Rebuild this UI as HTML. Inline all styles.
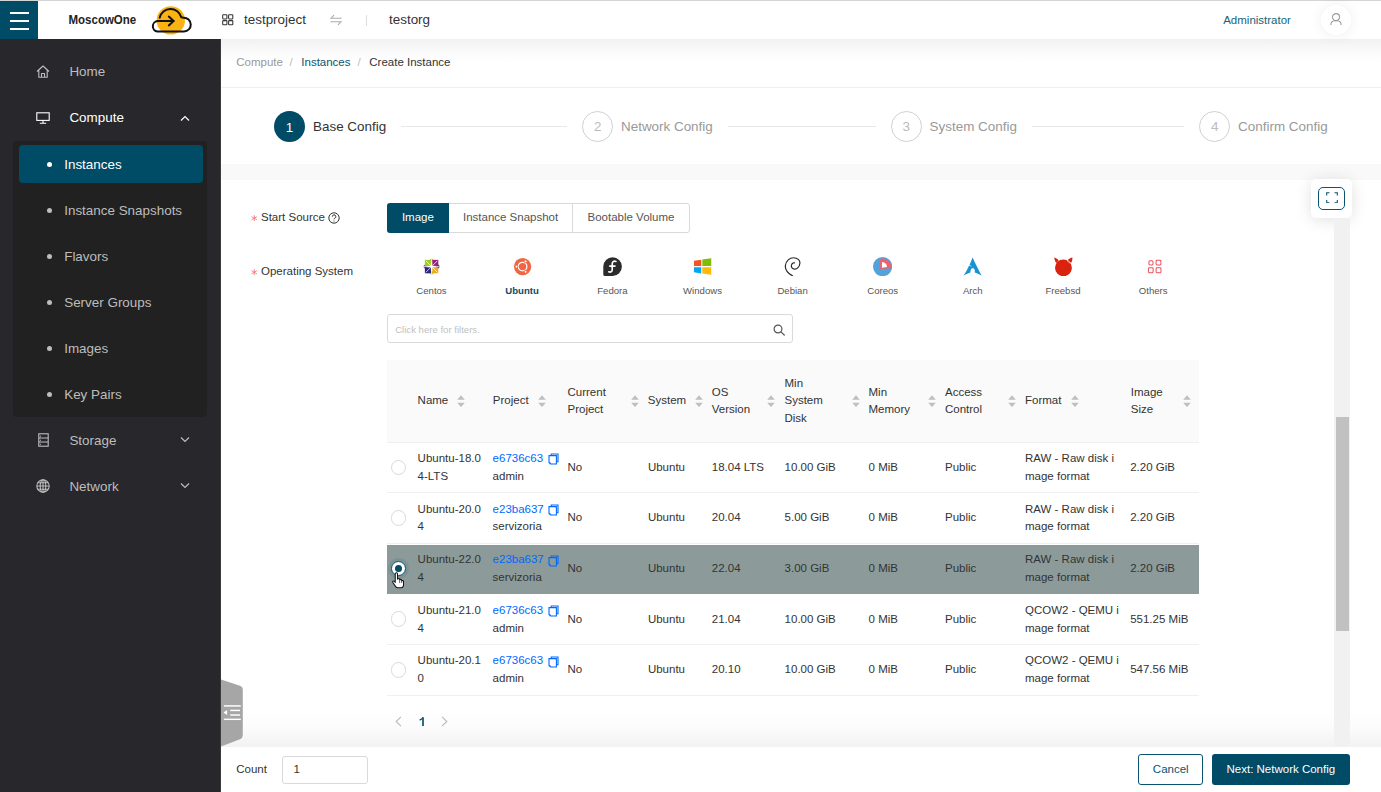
<!DOCTYPE html><html><head><meta charset="utf-8"><style>
html,body{margin:0;padding:0;width:1381px;height:792px;overflow:hidden;background:#fff;font-family:"Liberation Sans",sans-serif;}
.t{position:absolute;white-space:nowrap;}
.b{position:absolute;box-sizing:border-box;}
</style></head><body>
<div class="b" style="left:221.00px;top:39.00px;width:1160.00px;height:48.50px;background:#fff;"></div>
<div class="b" style="left:221.00px;top:87.00px;width:1160.00px;height:1.00px;background:#f0f0f0;"></div>
<div class="b" style="left:221.00px;top:88.00px;width:1160.00px;height:76.00px;background:#fff;"></div>
<div class="b" style="left:221.00px;top:164.00px;width:1160.00px;height:16.00px;background:#f9f9f9;"></div>
<div class="b" style="left:221.00px;top:39.00px;width:1160.00px;height:22.00px;background:linear-gradient(#f1f1f1 0%,#f7f7f7 35%,#fcfcfc 70%,rgba(255,255,255,0) 100%);"></div>
<div class="b" style="left:0.00px;top:0.00px;width:1381.00px;height:1.00px;background:#d4d4d4;"></div>
<div class="b" style="left:0.00px;top:1.00px;width:38.00px;height:38.00px;background:#004b66;"></div>
<div class="b" style="left:9.80px;top:12.20px;width:19.20px;height:2.20px;background:#fff;"></div>
<div class="b" style="left:9.80px;top:20.00px;width:19.20px;height:2.20px;background:#fff;"></div>
<div class="b" style="left:9.80px;top:27.60px;width:19.20px;height:2.20px;background:#fff;"></div>
<div class="t" style="left:68.50px;top:13.99px;font-size:11.51px;line-height:13.24px;color:#222;font-weight:bold;transform:scaleY(1.1);transform-origin:0 80%;">MoscowOne</div>
<svg class="b" style="left:150.00px;top:5.00px;" width="42" height="31" viewBox="0 0 42 31"><circle cx="20.8" cy="15.4" r="14.2" fill="#fbb314"/>
<path d="M9.7 12.8 A11.1 11.1 0 0 1 31.3 12.3 L33.6 12.7 A6.9 6.9 0 0 1 34 26.6 H7.4 A5.3 5.3 0 0 1 7.4 16.1 H23.6" fill="none" stroke="#111" stroke-width="2" stroke-linecap="round" stroke-linejoin="round"/>
<path d="M18.8 11.6 L23.6 16.1 L18.8 20.4" fill="none" stroke="#111" stroke-width="2" stroke-linecap="round" stroke-linejoin="round"/></svg>
<svg class="b" style="left:221.50px;top:14.00px;" width="12" height="12" viewBox="0 0 12 12"><g fill="none" stroke="#333" stroke-width="1.05"><rect x="0.7" y="0.7" width="4.2" height="4.2" rx="0.6"/><rect x="6.6" y="0.7" width="4.2" height="4.2" rx="0.6"/><rect x="0.7" y="6.6" width="4.2" height="4.2" rx="0.6"/><rect x="6.6" y="6.6" width="4.2" height="4.2" rx="0.6"/></g></svg>
<div class="t" style="left:244.00px;top:11.63px;font-size:13.43px;line-height:15.44px;color:#333;font-weight:normal;">testproject</div>
<svg class="b" style="left:329.50px;top:14.00px;" width="12" height="12" viewBox="0 0 12 12"><g fill="none" stroke="#aaa" stroke-width="1.1"><path d="M11.5 4.2 H1 L4 1.2"/><path d="M0.5 7.8 H11 L8 10.8"/></g></svg>
<div class="b" style="left:365.50px;top:15.00px;width:1.00px;height:11.00px;background:#ddd;"></div>
<div class="t" style="left:389.00px;top:11.63px;font-size:13.43px;line-height:15.44px;color:#333;font-weight:normal;">testorg</div>
<div class="t" style="left:1223.20px;top:13.59px;font-size:11.51px;line-height:13.24px;color:#17637a;font-weight:normal;">Administrator</div>
<div class="b" style="left:1321.30px;top:4.70px;width:30.00px;height:30.00px;border-radius:50%;background:#fff;box-shadow:0 0 14px rgba(0,0,0,0.07);"></div>
<svg class="b" style="left:1330.30px;top:13.20px;" width="12" height="12.5" viewBox="0 0 12 12.5"><g fill="none" stroke="#999" stroke-width="1.05"><circle cx="6" cy="4.1" r="3.5"/><path d="M0.8 12 Q0.9 7.8 6 7.6 Q11.1 7.8 11.2 12"/></g></svg>
<div class="b" style="left:0.00px;top:39.00px;width:220.60px;height:753.00px;background:#28272c;"></div>
<div class="b" style="left:220.20px;top:39.00px;width:1.00px;height:753.00px;background:#3a3a3a;"></div>
<div class="t" style="left:69.40px;top:63.63px;font-size:13.43px;line-height:15.44px;color:#bdbdbd;font-weight:normal;">Home</div>
<svg class="b" style="left:35.50px;top:64.50px;" width="14" height="13" viewBox="0 0 14 13"><g fill="none" stroke="#bdbdbd" stroke-width="1.1" stroke-linejoin="round"><path d="M1 6.5 L7 1 L13 6.5 M2.8 5 V12.3 H11.2 V5 M5.5 12.3 V8.5 H8.5 V12.3"/></g></svg>
<div class="t" style="left:69.40px;top:109.53px;font-size:13.43px;line-height:15.44px;color:#ffffff;font-weight:normal;">Compute</div>
<svg class="b" style="left:35.50px;top:112.00px;" width="14" height="12" viewBox="0 0 14 12"><g fill="none" stroke="#fff" stroke-width="1.1"><rect x="0.8" y="0.8" width="12.4" height="7.6"/><path d="M7 8.4 V11 M3.8 11.2 H10.2"/></g></svg>
<svg class="b" style="left:180.00px;top:114.70px;" width="10" height="7" viewBox="0 0 10 7"><path d="M1 5.5 L5 1.5 L9 5.5" fill="none" stroke="#fff" stroke-width="1.2"/></svg>
<div class="b" style="left:13.30px;top:140.80px;width:193.70px;height:276.00px;background:#212121;border-radius:4px;"></div>
<div class="b" style="left:18.70px;top:144.70px;width:184.30px;height:38.10px;background:#004b66;border-radius:4px;"></div>
<div class="b" style="left:47.00px;top:162.00px;width:5.00px;height:5.00px;border-radius:50%;background:#fff;"></div>
<div class="t" style="left:64.20px;top:156.63px;font-size:13.43px;line-height:15.44px;color:#fff;font-weight:normal;">Instances</div>
<div class="b" style="left:47.00px;top:208.03px;width:5.00px;height:5.00px;border-radius:50%;background:#bdbdbd;"></div>
<div class="t" style="left:64.20px;top:202.66px;font-size:13.43px;line-height:15.44px;color:#bdbdbd;font-weight:normal;">Instance Snapshots</div>
<div class="b" style="left:47.00px;top:254.06px;width:5.00px;height:5.00px;border-radius:50%;background:#bdbdbd;"></div>
<div class="t" style="left:64.20px;top:248.69px;font-size:13.43px;line-height:15.44px;color:#bdbdbd;font-weight:normal;">Flavors</div>
<div class="b" style="left:47.00px;top:300.09px;width:5.00px;height:5.00px;border-radius:50%;background:#bdbdbd;"></div>
<div class="t" style="left:64.20px;top:294.72px;font-size:13.43px;line-height:15.44px;color:#bdbdbd;font-weight:normal;">Server Groups</div>
<div class="b" style="left:47.00px;top:346.12px;width:5.00px;height:5.00px;border-radius:50%;background:#bdbdbd;"></div>
<div class="t" style="left:64.20px;top:340.75px;font-size:13.43px;line-height:15.44px;color:#bdbdbd;font-weight:normal;">Images</div>
<div class="b" style="left:47.00px;top:392.15px;width:5.00px;height:5.00px;border-radius:50%;background:#bdbdbd;"></div>
<div class="t" style="left:64.20px;top:386.78px;font-size:13.43px;line-height:15.44px;color:#bdbdbd;font-weight:normal;">Key Pairs</div>
<div class="t" style="left:69.40px;top:432.53px;font-size:13.43px;line-height:15.44px;color:#bdbdbd;font-weight:normal;">Storage</div>
<svg class="b" style="left:37.50px;top:432.50px;" width="11" height="14" viewBox="0 0 11 14"><g fill="none" stroke="#bdbdbd" stroke-width="1.1"><rect x="0.8" y="0.8" width="9.4" height="12.4"/><path d="M0.8 5 H10.2 M0.8 9 H10.2"/></g><g fill="#bdbdbd"><rect x="2" y="2.7" width="1" height="1"/><rect x="2" y="6.7" width="1" height="1"/><rect x="2" y="10.7" width="1" height="1"/></g></svg>
<svg class="b" style="left:179.80px;top:436.30px;" width="10" height="7" viewBox="0 0 10 7"><path d="M1 1.5 L5 5.5 L9 1.5" fill="none" stroke="#bdbdbd" stroke-width="1.2"/></svg>
<div class="t" style="left:69.40px;top:478.53px;font-size:13.43px;line-height:15.44px;color:#bdbdbd;font-weight:normal;">Network</div>
<svg class="b" style="left:35.80px;top:479.00px;" width="14" height="14" viewBox="0 0 14 14"><g fill="none" stroke="#bdbdbd" stroke-width="1.1"><circle cx="7" cy="7" r="6.2"/><ellipse cx="7" cy="7" rx="2.8" ry="6.2"/><path d="M0.8 7 H13.2 M1.8 3.8 H12.2 M1.8 10.2 H12.2 M7 0.8 V13.2"/></g></svg>
<svg class="b" style="left:179.80px;top:482.30px;" width="10" height="7" viewBox="0 0 10 7"><path d="M1 1.5 L5 5.5 L9 1.5" fill="none" stroke="#bdbdbd" stroke-width="1.2"/></svg>
<div class="t" style="left:236.30px;top:55.79px;font-size:11.51px;line-height:13.24px;color:#999;font-weight:normal;">Compute</div>
<div class="t" style="left:289.50px;top:55.79px;font-size:11.51px;line-height:13.24px;color:#bbb;font-weight:normal;">/</div>
<div class="t" style="left:301.30px;top:55.79px;font-size:11.51px;line-height:13.24px;color:#0b5470;font-weight:normal;">Instances</div>
<div class="t" style="left:357.50px;top:55.79px;font-size:11.51px;line-height:13.24px;color:#bbb;font-weight:normal;">/</div>
<div class="t" style="left:369.30px;top:55.79px;font-size:11.51px;line-height:13.24px;color:#333;font-weight:normal;">Create Instance</div>
<div class="b" style="left:274.10px;top:110.70px;width:30.90px;height:30.90px;border-radius:50%;background:#004b66;"></div>
<div class="t" style="left:189.60px;width:200px;text-align:center;top:119.63px;font-size:13.43px;line-height:15.44px;color:#fff;font-weight:normal;">1</div>
<div class="t" style="left:313.00px;top:118.83px;font-size:13.43px;line-height:15.44px;color:#333;font-weight:normal;">Base Config</div>
<div class="b" style="left:401.00px;top:126.00px;width:166.00px;height:1.00px;background:#e8e8e8;"></div>
<div class="b" style="left:582.20px;top:110.70px;width:30.90px;height:30.90px;border-radius:50%;border:1px solid #d0d0d0;"></div>
<div class="t" style="left:497.65px;width:200px;text-align:center;top:118.83px;font-size:13.43px;line-height:15.44px;color:#bbb;font-weight:normal;">2</div>
<div class="t" style="left:621.00px;top:118.83px;font-size:13.43px;line-height:15.44px;color:#999;font-weight:normal;">Network Config</div>
<div class="b" style="left:728.00px;top:126.00px;width:148.00px;height:1.00px;background:#e8e8e8;"></div>
<div class="b" style="left:890.80px;top:110.70px;width:30.90px;height:30.90px;border-radius:50%;border:1px solid #d0d0d0;"></div>
<div class="t" style="left:806.25px;width:200px;text-align:center;top:118.83px;font-size:13.43px;line-height:15.44px;color:#bbb;font-weight:normal;">3</div>
<div class="t" style="left:929.60px;top:118.83px;font-size:13.43px;line-height:15.44px;color:#999;font-weight:normal;">System Config</div>
<div class="b" style="left:1032.00px;top:126.00px;width:152.00px;height:1.00px;background:#e8e8e8;"></div>
<div class="b" style="left:1199.30px;top:110.70px;width:30.90px;height:30.90px;border-radius:50%;border:1px solid #d0d0d0;"></div>
<div class="t" style="left:1114.75px;width:200px;text-align:center;top:118.83px;font-size:13.43px;line-height:15.44px;color:#bbb;font-weight:normal;">4</div>
<div class="t" style="left:1238.10px;top:118.83px;font-size:13.43px;line-height:15.44px;color:#999;font-weight:normal;">Confirm Config</div>
<div class="b" style="left:1310.90px;top:178.70px;width:40.90px;height:38.90px;background:#fff;border-radius:5px;box-shadow:0 2px 16px rgba(0,0,0,0.12);"></div>
<div class="b" style="left:1318.00px;top:186.80px;width:27.00px;height:23.20px;border:1.2px solid #0b5470;border-radius:5px;"></div>
<svg class="b" style="left:1325.50px;top:191.80px;" width="12" height="11.5" viewBox="0 0 12 11.5"><g fill="none" stroke="#0b5470" stroke-width="1.1"><path d="M0.7 3.5 V0.7 H3.5 M8.5 0.7 H11.3 V3.5 M11.3 8 V10.8 H8.5 M3.5 10.8 H0.7 V8"/></g></svg>
<div class="b" style="left:1334.40px;top:217.60px;width:15.60px;height:529.00px;background:#f1f1f1;"></div>
<div class="b" style="left:1335.60px;top:417.00px;width:13.40px;height:213.50px;background:#c1c1c1;"></div>
<svg class="b" style="left:251.00px;top:214.50px;" width="6.5" height="6.5" viewBox="0 0 6.5 6.5"><path d="M3.25 0.2 V6.3 M0.6 1.7 L5.9 4.8 M0.6 4.8 L5.9 1.7" stroke="#f7707a" stroke-width="0.85"/></svg>
<div class="t" style="left:261.00px;top:210.99px;font-size:11.51px;line-height:13.24px;color:#333;font-weight:normal;">Start Source</div>
<svg class="b" style="left:327.80px;top:211.80px;" width="12" height="12" viewBox="0 0 12 12"><circle cx="6" cy="6" r="5.2" fill="none" stroke="#333" stroke-width="1"/><path d="M4.3 4.7 A1.75 1.75 0 1 1 6.6 6.3 C6.1 6.5 6 6.8 6 7.4" fill="none" stroke="#333" stroke-width="1"/><circle cx="6" cy="9" r="0.6" fill="#333"/></svg>
<div class="b" style="left:386.90px;top:203.30px;width:302.80px;height:30.00px;border:1px solid #d9d9d9;border-radius:3px;"></div>
<div class="b" style="left:572.00px;top:203.30px;width:1.00px;height:30.00px;background:#d9d9d9;"></div>
<div class="b" style="left:386.90px;top:203.30px;width:62.00px;height:30.00px;background:#004b66;border-radius:3px 0 0 3px;"></div>
<div class="t" style="left:317.90px;width:200px;text-align:center;top:211.49px;font-size:11.51px;line-height:13.24px;color:#fff;font-weight:normal;">Image</div>
<div class="t" style="left:410.60px;width:200px;text-align:center;top:211.49px;font-size:11.51px;line-height:13.24px;color:#555;font-weight:normal;">Instance Snapshot</div>
<div class="t" style="left:531.00px;width:200px;text-align:center;top:211.49px;font-size:11.51px;line-height:13.24px;color:#555;font-weight:normal;">Bootable Volume</div>
<svg class="b" style="left:251.00px;top:268.80px;" width="6.5" height="6.5" viewBox="0 0 6.5 6.5"><path d="M3.25 0.2 V6.3 M0.6 1.7 L5.9 4.8 M0.6 4.8 L5.9 1.7" stroke="#f7707a" stroke-width="0.85"/></svg>
<div class="t" style="left:261.00px;top:265.19px;font-size:11.51px;line-height:13.24px;color:#333;font-weight:normal;">Operating System</div>
<div class="t" style="left:331.50px;width:200px;text-align:center;top:284.86px;font-size:9.59px;line-height:11.03px;color:#555;font-weight:normal;">Centos</div>
<div class="t" style="left:422.10px;width:200px;text-align:center;top:284.86px;font-size:9.59px;line-height:11.03px;color:#0b4c66;font-weight:bold;">Ubuntu</div>
<div class="t" style="left:512.40px;width:200px;text-align:center;top:284.86px;font-size:9.59px;line-height:11.03px;color:#555;font-weight:normal;">Fedora</div>
<div class="t" style="left:602.50px;width:200px;text-align:center;top:284.86px;font-size:9.59px;line-height:11.03px;color:#555;font-weight:normal;">Windows</div>
<div class="t" style="left:692.60px;width:200px;text-align:center;top:284.86px;font-size:9.59px;line-height:11.03px;color:#555;font-weight:normal;">Debian</div>
<div class="t" style="left:782.70px;width:200px;text-align:center;top:284.86px;font-size:9.59px;line-height:11.03px;color:#555;font-weight:normal;">Coreos</div>
<div class="t" style="left:872.80px;width:200px;text-align:center;top:284.86px;font-size:9.59px;line-height:11.03px;color:#555;font-weight:normal;">Arch</div>
<div class="t" style="left:963.00px;width:200px;text-align:center;top:284.86px;font-size:9.59px;line-height:11.03px;color:#555;font-weight:normal;">Freebsd</div>
<div class="t" style="left:1053.20px;width:200px;text-align:center;top:284.86px;font-size:9.59px;line-height:11.03px;color:#555;font-weight:normal;">Others</div>
<svg class="b" style="left:421.90px;top:256.80px;" width="19.2" height="19.2" viewBox="0 0 20 20"><g transform="translate(10 10)"><path d="M0 -9 L2.5 -6.5 L0 -4 L-2.5 -6.5Z" fill="#efa724"/><path d="M9 0 L6.5 2.5 L4 0 L6.5 -2.5Z" fill="#262577"/><path d="M0 9 L-2.5 6.5 L0 4 L2.5 6.5Z" fill="#9ccd2a"/><path d="M-9 0 L-6.5 -2.5 L-4 0 L-6.5 2.5Z" fill="#932279"/><rect x="-7" y="-7" width="6.3" height="6.3" fill="#9ccd2a"/><rect x="0.7" y="-7" width="6.3" height="6.3" fill="#932279"/><rect x="0.7" y="0.7" width="6.3" height="6.3" fill="#efa724"/><rect x="-7" y="0.7" width="6.3" height="6.3" fill="#262577"/><path d="M-9 0 H9 M0 -9 V9 M-6 -6 L6 6 M6 -6 L-6 6" stroke="#fff" stroke-width="0.8"/></g></svg>
<svg class="b" style="left:512.50px;top:256.80px;" width="19.2" height="19.2" viewBox="0 0 20 20"><circle cx="10" cy="10" r="9" fill="#f06542"/><circle cx="10" cy="10" r="4.5" fill="none" stroke="#fff" stroke-width="1.3"/><g fill="#fff" stroke="#f06542" stroke-width="1"><circle cx="3.7" cy="10" r="1.5"/><circle cx="13.15" cy="4.55" r="1.5"/><circle cx="13.15" cy="15.45" r="1.5"/></g></svg>
<svg class="b" style="left:602.80px;top:256.80px;" width="19.2" height="19.2" viewBox="0 0 20 20"><path d="M10 0.3 A9.7 9.7 0 0 1 19.7 10 A9.7 9.7 0 0 1 10 19.7 H1.8 A1.5 1.5 0 0 1 0.3 18.2 V10 A9.7 9.7 0 0 1 10 0.3Z" fill="#2b2b2b"/><path d="M13.5 4.6 C11 3.6 9.6 5.3 9.6 7.2 V13.2 C9.6 15.5 7.8 16.2 6 15.4 M7 9.5 H12.5" fill="none" stroke="#fff" stroke-width="1.7" stroke-linecap="round"/></svg>
<svg class="b" style="left:692.90px;top:256.80px;" width="19.2" height="19.2" viewBox="0 0 20 20"><path d="M1 4 L8.6 2.9 V9.4 H1Z" fill="#f35325"/><path d="M9.7 2.7 L19 1.4 V9.4 H9.7Z" fill="#81bc06"/><path d="M1 10.6 H8.6 V17.1 L1 16Z" fill="#05a6f0"/><path d="M9.7 10.6 H19 V18.6 L9.7 17.3Z" fill="#ffba08"/></svg>
<svg class="b" style="left:783.00px;top:256.80px;" width="19.2" height="19.2" viewBox="0 0 20 20"><path d="M10 19.6 C5 17.5 2 13 2.5 9 C3 4 7 0.8 11 0.8 C15 0.8 18 3.5 17.6 6.5 C17.2 10.5 14.5 12.8 12 12.6 C9.8 12.4 8.4 10.5 8.8 8.6 C9.2 6.8 10.6 5.8 12 6.2" fill="none" stroke="#2b2b2b" stroke-width="1.25" stroke-linecap="round"/></svg>
<svg class="b" style="left:873.10px;top:256.80px;" width="19.2" height="19.2" viewBox="0 0 20 20"><circle cx="10" cy="10" r="10" fill="#53a3da"/><path d="M7.4 12.6 L7.4 2.2 Q8.5 1.3 10.5 1.5 A8.8 8.8 0 0 1 18.9 11.6 Z" fill="#f1606d"/><path d="M9.3 11.2 V6 Q9.3 5.3 10.2 5.3 A5.6 5.6 0 0 1 14.6 10.4 Z" fill="#fff"/></svg>
<svg class="b" style="left:963.20px;top:256.80px;" width="19.2" height="19.2" viewBox="0 0 20 20"><path d="M10 0.5 C9 3 8.2 5 6.9 8 C7.8 9 8.8 9.6 10.2 10.3 C8.6 9.8 7.4 9.4 6.4 8.9 C4.8 12.5 2.8 16.3 0.5 19.5 C3.5 17.8 5.8 16.8 7.8 16.2 C7.6 15.3 7.7 14.3 8.2 13.2 C8.8 11.8 10.3 11.3 11.5 12.3 C12.4 13.3 12.5 14.8 12.2 16.2 C14.4 16.8 16.7 17.9 19.5 19.5 C16 13 12.5 6 10 0.5Z" fill="#1793d1"/></svg>
<svg class="b" style="left:1053.40px;top:256.80px;" width="19.2" height="19.2" viewBox="0 0 20 20"><circle cx="10.9" cy="11.3" r="8.8" fill="#d9230f"/><path d="M1.3 0.6 C3.3 1 5 2.3 5.9 3.8 L3.4 6.2 C2.2 4.6 1.4 2.6 1.3 0.6Z" fill="#d9230f"/><path d="M20.2 0.6 C18.5 0.8 16.4 2 15.3 3.3 C16.8 4 17.9 5.1 18.6 6.6 C19.9 4.8 20.4 2.6 20.2 0.6Z" fill="#d9230f"/><path d="M14.6 2.8 C15.4 5 17.2 6.6 18.6 6" fill="none" stroke="#fff" stroke-width="0.8"/></svg>
<svg class="b" style="left:1143.60px;top:256.80px;" width="19.2" height="19.2" viewBox="0 0 20 20"><g fill="none" stroke="#e8505b" stroke-width="1.05"><rect x="5.1" y="3.9" width="4.3" height="4.4" rx="1.2"/><rect x="12.6" y="3.5" width="5" height="4.9" rx="1"/><rect x="4.6" y="11.3" width="4.9" height="5" rx="1"/><rect x="12.6" y="11.3" width="5.1" height="5" rx="1"/></g></svg>
<div class="b" style="left:387.10px;top:314.20px;width:405.60px;height:29.30px;border:1px solid #d9d9d9;border-radius:3px;"></div>
<div class="t" style="left:395.20px;top:324.06px;font-size:9.59px;line-height:11.03px;color:#bfbfbf;font-weight:normal;">Click here for filters.</div>
<svg class="b" style="left:772.50px;top:324.00px;" width="13" height="12" viewBox="0 0 13 12"><circle cx="5" cy="5" r="3.9" fill="none" stroke="#555" stroke-width="1.2"/><path d="M7.9 7.9 L11.3 11" stroke="#555" stroke-width="1.2" stroke-linecap="round"/></svg>
<div class="b" style="left:386.90px;top:359.60px;width:812.00px;height:83.00px;background:#fafafa;"></div>
<div class="b" style="left:386.90px;top:442.00px;width:812.00px;height:1.00px;background:#f0f0f0;"></div>
<div class="t" style="left:417.60px;top:394.29px;font-size:11.51px;line-height:13.24px;color:#333;font-weight:normal;">Name</div>
<div class="t" style="left:492.80px;top:394.29px;font-size:11.51px;line-height:13.24px;color:#333;font-weight:normal;">Project</div>
<div class="t" style="left:567.50px;top:385.66px;font-size:11.51px;line-height:13.24px;color:#333;font-weight:normal;">Current</div>
<div class="t" style="left:567.50px;top:402.92px;font-size:11.51px;line-height:13.24px;color:#333;font-weight:normal;">Project</div>
<div class="t" style="left:647.80px;top:394.29px;font-size:11.51px;line-height:13.24px;color:#333;font-weight:normal;">System</div>
<div class="t" style="left:711.80px;top:385.66px;font-size:11.51px;line-height:13.24px;color:#333;font-weight:normal;">OS</div>
<div class="t" style="left:711.80px;top:402.92px;font-size:11.51px;line-height:13.24px;color:#333;font-weight:normal;">Version</div>
<div class="t" style="left:784.50px;top:377.03px;font-size:11.51px;line-height:13.24px;color:#333;font-weight:normal;">Min</div>
<div class="t" style="left:784.50px;top:394.29px;font-size:11.51px;line-height:13.24px;color:#333;font-weight:normal;">System</div>
<div class="t" style="left:784.50px;top:411.55px;font-size:11.51px;line-height:13.24px;color:#333;font-weight:normal;">Disk</div>
<div class="t" style="left:868.50px;top:385.66px;font-size:11.51px;line-height:13.24px;color:#333;font-weight:normal;">Min</div>
<div class="t" style="left:868.50px;top:402.92px;font-size:11.51px;line-height:13.24px;color:#333;font-weight:normal;">Memory</div>
<div class="t" style="left:945.00px;top:385.66px;font-size:11.51px;line-height:13.24px;color:#333;font-weight:normal;">Access</div>
<div class="t" style="left:945.00px;top:402.92px;font-size:11.51px;line-height:13.24px;color:#333;font-weight:normal;">Control</div>
<div class="t" style="left:1025.00px;top:394.29px;font-size:11.51px;line-height:13.24px;color:#333;font-weight:normal;">Format</div>
<div class="t" style="left:1130.80px;top:385.66px;font-size:11.51px;line-height:13.24px;color:#333;font-weight:normal;">Image</div>
<div class="t" style="left:1130.80px;top:402.92px;font-size:11.51px;line-height:13.24px;color:#333;font-weight:normal;">Size</div>
<svg class="b" style="left:457.10px;top:394.50px;" width="8" height="12.4" viewBox="0 0 8 12.4"><path d="M4 0.3 L7.8 4.7 H0.2Z M4 12.1 L7.8 7.7 H0.2Z" fill="#bfbfbf"/></svg>
<svg class="b" style="left:537.80px;top:394.50px;" width="8" height="12.4" viewBox="0 0 8 12.4"><path d="M4 0.3 L7.8 4.7 H0.2Z M4 12.1 L7.8 7.7 H0.2Z" fill="#bfbfbf"/></svg>
<svg class="b" style="left:630.70px;top:394.50px;" width="8" height="12.4" viewBox="0 0 8 12.4"><path d="M4 0.3 L7.8 4.7 H0.2Z M4 12.1 L7.8 7.7 H0.2Z" fill="#bfbfbf"/></svg>
<svg class="b" style="left:694.80px;top:394.50px;" width="8" height="12.4" viewBox="0 0 8 12.4"><path d="M4 0.3 L7.8 4.7 H0.2Z M4 12.1 L7.8 7.7 H0.2Z" fill="#bfbfbf"/></svg>
<svg class="b" style="left:767.40px;top:394.50px;" width="8" height="12.4" viewBox="0 0 8 12.4"><path d="M4 0.3 L7.8 4.7 H0.2Z M4 12.1 L7.8 7.7 H0.2Z" fill="#bfbfbf"/></svg>
<svg class="b" style="left:851.50px;top:394.50px;" width="8" height="12.4" viewBox="0 0 8 12.4"><path d="M4 0.3 L7.8 4.7 H0.2Z M4 12.1 L7.8 7.7 H0.2Z" fill="#bfbfbf"/></svg>
<svg class="b" style="left:927.70px;top:394.50px;" width="8" height="12.4" viewBox="0 0 8 12.4"><path d="M4 0.3 L7.8 4.7 H0.2Z M4 12.1 L7.8 7.7 H0.2Z" fill="#bfbfbf"/></svg>
<svg class="b" style="left:1007.70px;top:394.50px;" width="8" height="12.4" viewBox="0 0 8 12.4"><path d="M4 0.3 L7.8 4.7 H0.2Z M4 12.1 L7.8 7.7 H0.2Z" fill="#bfbfbf"/></svg>
<svg class="b" style="left:1070.50px;top:394.50px;" width="8" height="12.4" viewBox="0 0 8 12.4"><path d="M4 0.3 L7.8 4.7 H0.2Z M4 12.1 L7.8 7.7 H0.2Z" fill="#bfbfbf"/></svg>
<svg class="b" style="left:1182.50px;top:394.50px;" width="8" height="12.4" viewBox="0 0 8 12.4"><path d="M4 0.3 L7.8 4.7 H0.2Z M4 12.1 L7.8 7.7 H0.2Z" fill="#bfbfbf"/></svg>
<div class="b" style="left:386.90px;top:492.28px;width:812.00px;height:1.00px;background:#f0f0f0;"></div>
<div class="b" style="left:390.60px;top:459.69px;width:15.60px;height:15.60px;border-radius:50%;background:#fff;border:1px solid #d9d9d9;"></div>
<div class="t" style="left:417.60px;top:452.08px;font-size:11.51px;line-height:13.24px;color:#333;font-weight:normal;">Ubuntu-18.0</div>
<div class="t" style="left:417.60px;top:469.88px;font-size:11.51px;line-height:13.24px;color:#333;font-weight:normal;">4-LTS</div>
<div class="t" style="left:492.60px;top:452.08px;font-size:11.51px;line-height:13.24px;color:#0068ff;font-weight:normal;">e6736c63</div>
<svg class="b" style="left:547.80px;top:453.49px;" width="11" height="12" viewBox="0 0 11 12"><g fill="none" stroke="#0068ff" stroke-width="1.1"><path d="M3.2 2.6 V1 H10 V8.8 H8.4"/><path d="M1 2.6 H8.4 V11 H2.6 L1 9.4Z"/></g><path d="M1 9.4 H2.6 V11Z" fill="#0068ff"/></svg>
<div class="t" style="left:492.60px;top:469.88px;font-size:11.51px;line-height:13.24px;color:#333;font-weight:normal;">admin</div>
<div class="t" style="left:567.50px;top:460.78px;font-size:11.51px;line-height:13.24px;color:#333;font-weight:normal;">No</div>
<div class="t" style="left:647.90px;top:460.78px;font-size:11.51px;line-height:13.24px;color:#333;font-weight:normal;">Ubuntu</div>
<div class="t" style="left:711.80px;top:460.78px;font-size:11.51px;line-height:13.24px;color:#333;font-weight:normal;">18.04 LTS</div>
<div class="t" style="left:784.60px;top:460.78px;font-size:11.51px;line-height:13.24px;color:#333;font-weight:normal;">10.00 GiB</div>
<div class="t" style="left:868.60px;top:460.78px;font-size:11.51px;line-height:13.24px;color:#333;font-weight:normal;">0 MiB</div>
<div class="t" style="left:945.00px;top:460.78px;font-size:11.51px;line-height:13.24px;color:#333;font-weight:normal;">Public</div>
<div class="t" style="left:1025.00px;top:452.08px;font-size:11.51px;line-height:13.24px;color:#333;font-weight:normal;">RAW - Raw disk i</div>
<div class="t" style="left:1025.00px;top:469.88px;font-size:11.51px;line-height:13.24px;color:#333;font-weight:normal;">mage format</div>
<div class="t" style="left:1130.20px;top:460.78px;font-size:11.51px;line-height:13.24px;color:#333;font-weight:normal;">2.20 GiB</div>
<div class="b" style="left:386.90px;top:542.86px;width:812.00px;height:1.00px;background:#f0f0f0;"></div>
<div class="b" style="left:390.60px;top:510.27px;width:15.60px;height:15.60px;border-radius:50%;background:#fff;border:1px solid #d9d9d9;"></div>
<div class="t" style="left:417.60px;top:502.66px;font-size:11.51px;line-height:13.24px;color:#333;font-weight:normal;">Ubuntu-20.0</div>
<div class="t" style="left:417.60px;top:520.46px;font-size:11.51px;line-height:13.24px;color:#333;font-weight:normal;">4</div>
<div class="t" style="left:492.60px;top:502.66px;font-size:11.51px;line-height:13.24px;color:#0068ff;font-weight:normal;">e23ba637</div>
<svg class="b" style="left:547.80px;top:504.07px;" width="11" height="12" viewBox="0 0 11 12"><g fill="none" stroke="#0068ff" stroke-width="1.1"><path d="M3.2 2.6 V1 H10 V8.8 H8.4"/><path d="M1 2.6 H8.4 V11 H2.6 L1 9.4Z"/></g><path d="M1 9.4 H2.6 V11Z" fill="#0068ff"/></svg>
<div class="t" style="left:492.60px;top:520.46px;font-size:11.51px;line-height:13.24px;color:#333;font-weight:normal;">servizoria</div>
<div class="t" style="left:567.50px;top:511.36px;font-size:11.51px;line-height:13.24px;color:#333;font-weight:normal;">No</div>
<div class="t" style="left:647.90px;top:511.36px;font-size:11.51px;line-height:13.24px;color:#333;font-weight:normal;">Ubuntu</div>
<div class="t" style="left:711.80px;top:511.36px;font-size:11.51px;line-height:13.24px;color:#333;font-weight:normal;">20.04</div>
<div class="t" style="left:784.60px;top:511.36px;font-size:11.51px;line-height:13.24px;color:#333;font-weight:normal;">5.00 GiB</div>
<div class="t" style="left:868.60px;top:511.36px;font-size:11.51px;line-height:13.24px;color:#333;font-weight:normal;">0 MiB</div>
<div class="t" style="left:945.00px;top:511.36px;font-size:11.51px;line-height:13.24px;color:#333;font-weight:normal;">Public</div>
<div class="t" style="left:1025.00px;top:502.66px;font-size:11.51px;line-height:13.24px;color:#333;font-weight:normal;">RAW - Raw disk i</div>
<div class="t" style="left:1025.00px;top:520.46px;font-size:11.51px;line-height:13.24px;color:#333;font-weight:normal;">mage format</div>
<div class="t" style="left:1130.20px;top:511.36px;font-size:11.51px;line-height:13.24px;color:#333;font-weight:normal;">2.20 GiB</div>
<div class="b" style="left:387.20px;top:544.56px;width:811.50px;height:49.78px;background:#8c9b9a;"></div>
<div class="b" style="left:390.60px;top:560.85px;width:15.60px;height:15.60px;border-radius:50%;background:#fff;border:1px solid #0b5470;box-shadow:0 0 0 3px rgba(0,75,102,0.12);"></div>
<div class="b" style="left:394.50px;top:564.95px;width:7.40px;height:7.40px;border-radius:50%;background:#004b66;"></div>
<div class="t" style="left:417.60px;top:553.24px;font-size:11.51px;line-height:13.24px;color:#333;font-weight:normal;">Ubuntu-22.0</div>
<div class="t" style="left:417.60px;top:571.04px;font-size:11.51px;line-height:13.24px;color:#333;font-weight:normal;">4</div>
<div class="t" style="left:492.60px;top:553.24px;font-size:11.51px;line-height:13.24px;color:#0068ff;font-weight:normal;">e23ba637</div>
<svg class="b" style="left:547.80px;top:554.65px;" width="11" height="12" viewBox="0 0 11 12"><g fill="none" stroke="#0068ff" stroke-width="1.1"><path d="M3.2 2.6 V1 H10 V8.8 H8.4"/><path d="M1 2.6 H8.4 V11 H2.6 L1 9.4Z"/></g><path d="M1 9.4 H2.6 V11Z" fill="#0068ff"/></svg>
<div class="t" style="left:492.60px;top:571.04px;font-size:11.51px;line-height:13.24px;color:#333;font-weight:normal;">servizoria</div>
<div class="t" style="left:567.50px;top:561.94px;font-size:11.51px;line-height:13.24px;color:#333;font-weight:normal;">No</div>
<div class="t" style="left:647.90px;top:561.94px;font-size:11.51px;line-height:13.24px;color:#333;font-weight:normal;">Ubuntu</div>
<div class="t" style="left:711.80px;top:561.94px;font-size:11.51px;line-height:13.24px;color:#333;font-weight:normal;">22.04</div>
<div class="t" style="left:784.60px;top:561.94px;font-size:11.51px;line-height:13.24px;color:#333;font-weight:normal;">3.00 GiB</div>
<div class="t" style="left:868.60px;top:561.94px;font-size:11.51px;line-height:13.24px;color:#333;font-weight:normal;">0 MiB</div>
<div class="t" style="left:945.00px;top:561.94px;font-size:11.51px;line-height:13.24px;color:#333;font-weight:normal;">Public</div>
<div class="t" style="left:1025.00px;top:553.24px;font-size:11.51px;line-height:13.24px;color:#333;font-weight:normal;">RAW - Raw disk i</div>
<div class="t" style="left:1025.00px;top:571.04px;font-size:11.51px;line-height:13.24px;color:#333;font-weight:normal;">mage format</div>
<div class="t" style="left:1130.20px;top:561.94px;font-size:11.51px;line-height:13.24px;color:#333;font-weight:normal;">2.20 GiB</div>
<div class="b" style="left:386.90px;top:644.02px;width:812.00px;height:1.00px;background:#f0f0f0;"></div>
<div class="b" style="left:390.60px;top:611.43px;width:15.60px;height:15.60px;border-radius:50%;background:#fff;border:1px solid #d9d9d9;"></div>
<div class="t" style="left:417.60px;top:603.82px;font-size:11.51px;line-height:13.24px;color:#333;font-weight:normal;">Ubuntu-21.0</div>
<div class="t" style="left:417.60px;top:621.62px;font-size:11.51px;line-height:13.24px;color:#333;font-weight:normal;">4</div>
<div class="t" style="left:492.60px;top:603.82px;font-size:11.51px;line-height:13.24px;color:#0068ff;font-weight:normal;">e6736c63</div>
<svg class="b" style="left:547.80px;top:605.23px;" width="11" height="12" viewBox="0 0 11 12"><g fill="none" stroke="#0068ff" stroke-width="1.1"><path d="M3.2 2.6 V1 H10 V8.8 H8.4"/><path d="M1 2.6 H8.4 V11 H2.6 L1 9.4Z"/></g><path d="M1 9.4 H2.6 V11Z" fill="#0068ff"/></svg>
<div class="t" style="left:492.60px;top:621.62px;font-size:11.51px;line-height:13.24px;color:#333;font-weight:normal;">admin</div>
<div class="t" style="left:567.50px;top:612.52px;font-size:11.51px;line-height:13.24px;color:#333;font-weight:normal;">No</div>
<div class="t" style="left:647.90px;top:612.52px;font-size:11.51px;line-height:13.24px;color:#333;font-weight:normal;">Ubuntu</div>
<div class="t" style="left:711.80px;top:612.52px;font-size:11.51px;line-height:13.24px;color:#333;font-weight:normal;">21.04</div>
<div class="t" style="left:784.60px;top:612.52px;font-size:11.51px;line-height:13.24px;color:#333;font-weight:normal;">10.00 GiB</div>
<div class="t" style="left:868.60px;top:612.52px;font-size:11.51px;line-height:13.24px;color:#333;font-weight:normal;">0 MiB</div>
<div class="t" style="left:945.00px;top:612.52px;font-size:11.51px;line-height:13.24px;color:#333;font-weight:normal;">Public</div>
<div class="t" style="left:1025.00px;top:603.82px;font-size:11.51px;line-height:13.24px;color:#333;font-weight:normal;">QCOW2 - QEMU i</div>
<div class="t" style="left:1025.00px;top:621.62px;font-size:11.51px;line-height:13.24px;color:#333;font-weight:normal;">mage format</div>
<div class="t" style="left:1130.20px;top:612.52px;font-size:11.51px;line-height:13.24px;color:#333;font-weight:normal;">551.25 MiB</div>
<div class="b" style="left:386.90px;top:694.60px;width:812.00px;height:1.00px;background:#f0f0f0;"></div>
<div class="b" style="left:390.60px;top:662.01px;width:15.60px;height:15.60px;border-radius:50%;background:#fff;border:1px solid #d9d9d9;"></div>
<div class="t" style="left:417.60px;top:654.40px;font-size:11.51px;line-height:13.24px;color:#333;font-weight:normal;">Ubuntu-20.1</div>
<div class="t" style="left:417.60px;top:672.20px;font-size:11.51px;line-height:13.24px;color:#333;font-weight:normal;">0</div>
<div class="t" style="left:492.60px;top:654.40px;font-size:11.51px;line-height:13.24px;color:#0068ff;font-weight:normal;">e6736c63</div>
<svg class="b" style="left:547.80px;top:655.81px;" width="11" height="12" viewBox="0 0 11 12"><g fill="none" stroke="#0068ff" stroke-width="1.1"><path d="M3.2 2.6 V1 H10 V8.8 H8.4"/><path d="M1 2.6 H8.4 V11 H2.6 L1 9.4Z"/></g><path d="M1 9.4 H2.6 V11Z" fill="#0068ff"/></svg>
<div class="t" style="left:492.60px;top:672.20px;font-size:11.51px;line-height:13.24px;color:#333;font-weight:normal;">admin</div>
<div class="t" style="left:567.50px;top:663.10px;font-size:11.51px;line-height:13.24px;color:#333;font-weight:normal;">No</div>
<div class="t" style="left:647.90px;top:663.10px;font-size:11.51px;line-height:13.24px;color:#333;font-weight:normal;">Ubuntu</div>
<div class="t" style="left:711.80px;top:663.10px;font-size:11.51px;line-height:13.24px;color:#333;font-weight:normal;">20.10</div>
<div class="t" style="left:784.60px;top:663.10px;font-size:11.51px;line-height:13.24px;color:#333;font-weight:normal;">10.00 GiB</div>
<div class="t" style="left:868.60px;top:663.10px;font-size:11.51px;line-height:13.24px;color:#333;font-weight:normal;">0 MiB</div>
<div class="t" style="left:945.00px;top:663.10px;font-size:11.51px;line-height:13.24px;color:#333;font-weight:normal;">Public</div>
<div class="t" style="left:1025.00px;top:654.40px;font-size:11.51px;line-height:13.24px;color:#333;font-weight:normal;">QCOW2 - QEMU i</div>
<div class="t" style="left:1025.00px;top:672.20px;font-size:11.51px;line-height:13.24px;color:#333;font-weight:normal;">mage format</div>
<div class="t" style="left:1130.20px;top:663.10px;font-size:11.51px;line-height:13.24px;color:#333;font-weight:normal;">547.56 MiB</div>
<svg class="b" style="left:394.50px;top:716.00px;" width="7" height="11" viewBox="0 0 7 11"><path d="M6 0.8 L1.2 5.5 L6 10.2" fill="none" stroke="#bbb" stroke-width="1.1"/></svg>
<svg class="b" style="left:418.50px;top:716.50px;" width="6" height="9.5" viewBox="0 0 6 9.5"><path d="M4 0.6 V9.2" stroke="#0b5470" stroke-width="1.7"/><path d="M0.6 3.2 Q3 2.2 4.2 0.4" fill="none" stroke="#0b5470" stroke-width="1.3"/></svg>
<svg class="b" style="left:440.50px;top:716.00px;" width="7" height="11" viewBox="0 0 7 11"><path d="M1 0.8 L5.8 5.5 L1 10.2" fill="none" stroke="#bbb" stroke-width="1.1"/></svg>
<div class="b" style="left:221.00px;top:710.00px;width:1113.40px;height:36.60px;background:linear-gradient(rgba(0,0,0,0) 0%,rgba(0,0,0,0.012) 45%,rgba(0,0,0,0.05) 100%);"></div>
<div class="b" style="left:1350.00px;top:710.00px;width:31.00px;height:36.60px;background:linear-gradient(rgba(0,0,0,0) 0%,rgba(0,0,0,0.012) 45%,rgba(0,0,0,0.05) 100%);"></div>
<div class="b" style="left:221.00px;top:746.60px;width:1160.00px;height:46.00px;background:#fff;"></div>
<div class="t" style="left:236.20px;top:762.99px;font-size:11.51px;line-height:13.24px;color:#333;font-weight:normal;">Count</div>
<div class="b" style="left:282.30px;top:755.50px;width:85.40px;height:28.90px;border:1px solid #d9d9d9;border-radius:3px;"></div>
<div class="t" style="left:293.60px;top:762.99px;font-size:11.51px;line-height:13.24px;color:#333;font-weight:normal;">1</div>
<div class="b" style="left:1138.10px;top:754.10px;width:65.30px;height:30.50px;border:1px solid #0b5470;border-radius:3px;"></div>
<div class="t" style="left:1070.75px;width:200px;text-align:center;top:762.99px;font-size:11.51px;line-height:13.24px;color:#0b5470;font-weight:normal;">Cancel</div>
<div class="b" style="left:1211.70px;top:754.10px;width:138.30px;height:30.50px;background:#004b66;border-radius:3px;"></div>
<div class="t" style="left:1180.85px;width:200px;text-align:center;top:762.99px;font-size:11.51px;line-height:13.24px;color:#fff;font-weight:normal;">Next: Network Config</div>
<svg class="b" style="left:221.00px;top:679.00px;" width="22.5" height="67.5" viewBox="0 0 22.5 67.5"><path d="M0 0.5 L19 6.8 Q21.8 7.9 21.8 11 V56 Q21.8 59 19 60.2 L0 67.5Z" fill="#a6a6a6"/><g fill="#fff"><rect x="2.9" y="26.2" width="16.9" height="1.45"/><rect x="9.2" y="30.7" width="9.9" height="1.45"/><rect x="9.2" y="35.3" width="9.9" height="1.45"/><rect x="2.9" y="39.6" width="16.9" height="1.45"/><path d="M2.5 33.5 L6.1 30.9 V36.1Z"/></g></svg>
<svg class="b" style="left:391.80px;top:572.30px;" width="12" height="16.6" viewBox="0 0 13 18"><path d="M3.5 2 Q3.5 0.8 4.75 0.8 Q6 0.8 6 2 V7.8 Q6.2 7 7.15 7 Q8.3 7 8.3 8.2 V8.8 Q8.5 8 9.4 8 Q10.5 8 10.5 9.2 V9.8 Q10.7 9.1 11.5 9.1 Q12.5 9.1 12.5 10.3 V13.5 Q12.5 17.2 9 17.2 H6.5 Q4.8 17.2 3.8 15.6 L0.9 11.3 Q0.4 10.4 1.2 9.9 Q2 9.5 2.7 10.3 L3.5 11.3 Z" fill="#fff" stroke="#111" stroke-width="1.1" stroke-linejoin="round"/><path d="M8.3 9 V12 M10.5 10 V12" stroke="#111" stroke-width="0.7"/></svg>
</body></html>
